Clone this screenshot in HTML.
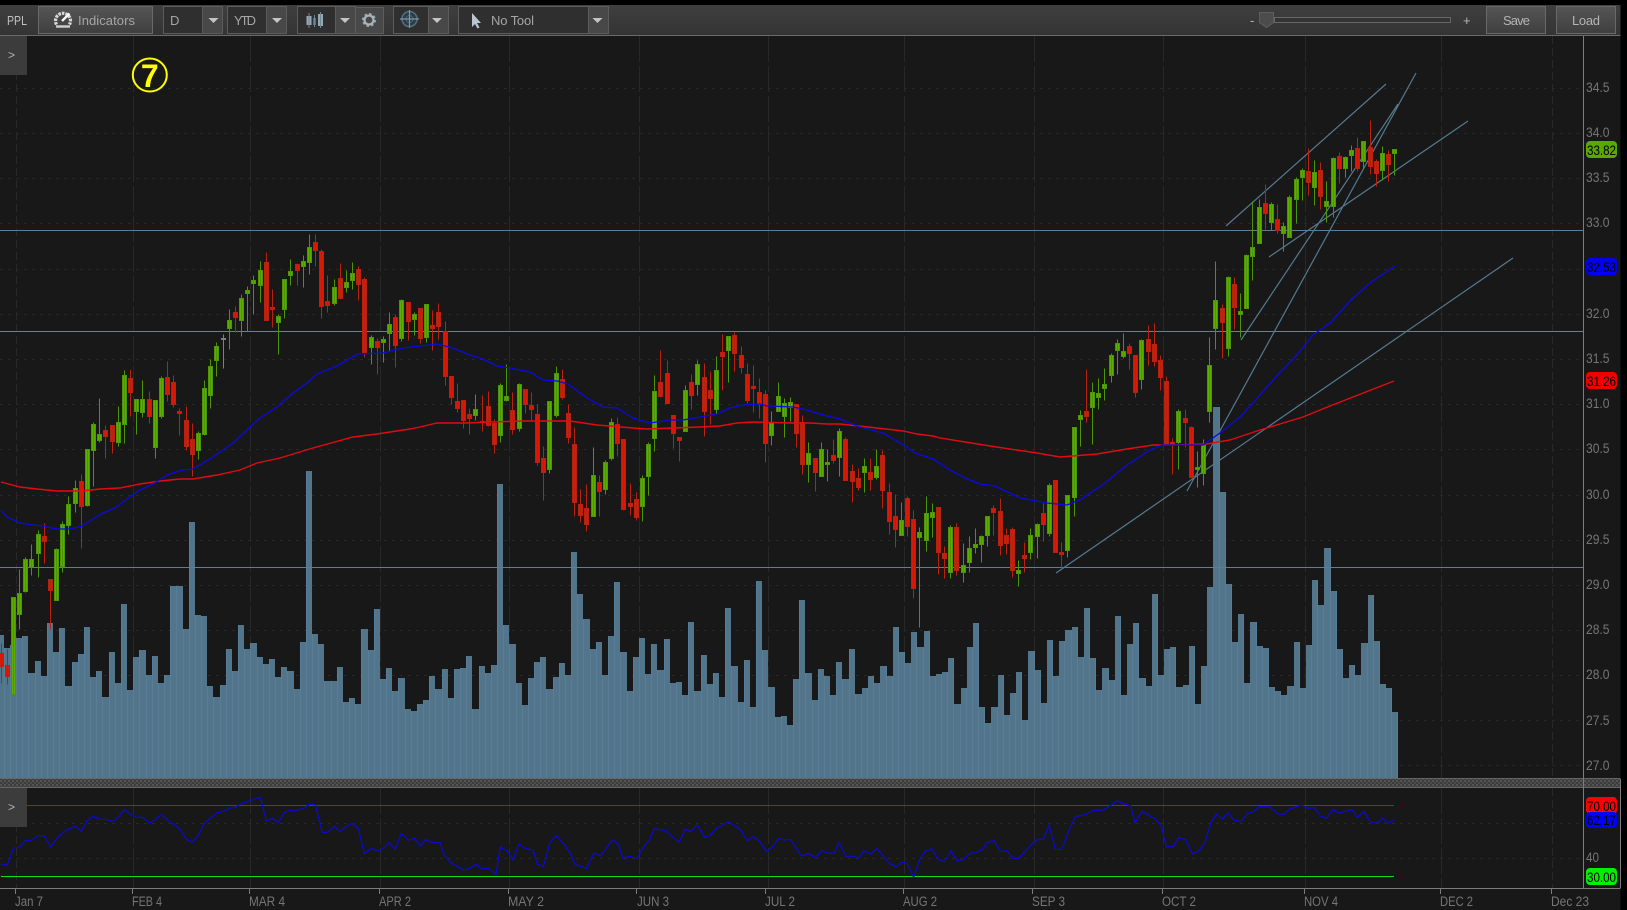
<!DOCTYPE html>
<html><head><meta charset="utf-8"><title>PPL chart</title>
<style>
html,body{margin:0;padding:0;background:#000;width:1627px;height:910px;overflow:hidden}
svg{display:block;font-family:"Liberation Sans",sans-serif}
.g{stroke:#4c9606;fill:#5cae00}.r{stroke:#bb200f;fill:#d81a08}.k{stroke:#808080;fill:#808080}
.a{fill:#757575;font-size:14px}.d{fill:#757575;font-size:13.5px}
.t{fill:#b4b4b4;font-size:13px}
.b{fill:#000;font-size:14px}
.tl{stroke:#557a90;stroke-width:1.2;fill:none}
.s{fill:#2f2f2f;stroke:#5c5c5c}.m{fill:#484848;stroke:#5c5c5c}.ar{fill:#c4c4c4}
.btn{fill:url(#bg);stroke:#696969}
polyline{fill:none;vector-effect:non-scaling-stroke}
</style></head><body>
<svg width="1627" height="910" viewBox="0 0 1627 910" xmlns="http://www.w3.org/2000/svg">
<defs>
<linearGradient id="tb" x1="0" y1="0" x2="0" y2="1"><stop offset="0" stop-color="#3f3f3f"/><stop offset="1" stop-color="#343434"/></linearGradient>
<linearGradient id="bg" x1="0" y1="0" x2="0" y2="1"><stop offset="0" stop-color="#555"/><stop offset="1" stop-color="#3f3f3f"/></linearGradient>
<pattern id="vol" x="-2" y="0" width="37" height="10" patternUnits="userSpaceOnUse"><rect width="37" height="10" fill="#52758c"/><rect x="0" width="1" height="10" fill="#587d97"/><rect x="6" width="1" height="10" fill="#587d97"/><rect x="12" width="1" height="10" fill="#587d97"/><rect x="18" width="1" height="10" fill="#587d97"/><rect x="24" width="1" height="10" fill="#587d97"/><rect x="30" width="1" height="10" fill="#587d97"/></pattern>
<pattern id="hat" width="4" height="4" patternUnits="userSpaceOnUse"><rect width="4" height="4" fill="#3c3c3c"/><rect width="2" height="2" fill="#555"/><rect x="2" y="2" width="2" height="2" fill="#4c4c4c"/></pattern>
</defs>
<rect width="1627" height="910" fill="#000"/>
<rect x="0" y="36" width="1620.5" height="874" fill="#181818"/>
<!-- toolbar -->
<rect x="0" y="5" width="1620.5" height="30" fill="url(#tb)"/>
<rect x="0" y="35" width="1620.5" height="1" fill="#6a6a6a"/>
<text x="7" y="25" class="t" textLength="20" lengthAdjust="spacingAndGlyphs" style="fill:#c0c0c0">PPL</text>
<rect x="38.5" y="6.5" width="114" height="27" class="btn"/>
<g transform="translate(63 20)"><path d="M-6.500 4.500A7.500 7.500 0 1 1 6.500 4.500" fill="none" stroke="#d8d8d8" stroke-width="3.200" stroke-dasharray="2.600 1"/><circle r="4" fill="#444"/><path d="M-1 1L6.500 -6.500" stroke="#f4f4f4" stroke-width="2.400"/><path d="M-7 6.500H7" stroke="#cfcfcf" stroke-width="2.400"/></g>
<text x="78" y="25" class="t" textLength="57" style="fill:#a6a6a6">Indicators</text>
<rect x="163.5" y="6.5" width="39" height="27" class="s"/><rect x="202.5" y="6.5" width="20" height="27" class="m"/><path d="M208.5 18h10l-5 5z" class="ar"/>
<text x="170" y="25" class="t" style="fill:#a6a6a6">D</text>
<rect x="227.5" y="6.5" width="39" height="27" class="s"/><rect x="266.5" y="6.5" width="20" height="27" class="m"/><path d="M272 18h10l-5 5z" class="ar"/>
<text x="234" y="25" class="t" textLength="22" style="fill:#a6a6a6">YTD</text>
<rect x="297.5" y="6.5" width="38" height="27" class="s"/><rect x="335.5" y="6.5" width="20" height="27" class="m"/><path d="M340 18h10l-5 5z" class="ar"/>
<path d="M306.500 16h5v9h-5zM313.500 18h2v7h-2zM318 14h5v12h-5z" fill="#93a9b8"/><path d="M309 13v15M314.500 15v12M320.500 12v16" stroke="#72868f"/>
<rect x="355.500" y="7.500" width="28" height="26" class="m"/>
<circle cx="369" cy="20" r="5.500" fill="none" stroke="#9aa7ae" stroke-width="3" stroke-dasharray="2.300 2"/><circle cx="369" cy="20" r="4.500" fill="none" stroke="#a8b4ba" stroke-width="2.200"/>
<rect x="393.500" y="6.500" width="35" height="27" class="s"/><rect x="428.500" y="6.500" width="20" height="27" class="m"/><path d="M432 18h10l-5 5z" class="ar"/>
<circle cx="409.500" cy="19" r="7.500" fill="#2b3c46" stroke="#566f7d" stroke-width="1.500"/><circle cx="409.500" cy="19" r="3.500" fill="none" stroke="#4a6270"/><path d="M400 19h19M409.500 10v18" stroke="#7d98a8" stroke-width="1.200"/>
<rect x="458.500" y="6.500" width="130" height="27" class="s"/><rect x="588.500" y="6.500" width="20" height="27" class="m"/><path d="M592.500 18h10l-5 5z" class="ar"/>
<path d="M472 13v14l3-3 2.500 4.500 2-1-2.500-4.500h4z" fill="#b8c6d0"/>
<text x="491" y="25" class="t" textLength="43" style="fill:#a6a6a6">No Tool</text>
<text x="1250" y="25" class="t">-</text>
<rect x="1274.500" y="17.500" width="176" height="5" fill="#343434" stroke="#666"/>
<path d="M1259.500 12.500h14v10l-7 5-7-5z" fill="#4c4c4c" stroke="#5e5e5e"/>
<text x="1463" y="25" class="t">+</text>
<rect x="1486.500" y="6.500" width="59" height="27" class="btn"/><text x="1503" y="25" class="t" textLength="27">Save</text>
<rect x="1556.500" y="6.500" width="59" height="27" class="btn"/><text x="1572" y="25" class="t" textLength="28">Load</text>
<!-- grid -->
<g stroke="#272727" stroke-width="1" stroke-dasharray="3 5" fill="none">
<path d="M0 88.500H1583M0 133.500H1583M0 178.500H1583M0 223.500H1583M0 269.500H1583M0 314.500H1583M0 359.500H1583M0 404.500H1583M0 449.500H1583M0 495.500H1583M0 540.500H1583M0 585.500H1583M0 630.500H1583M0 675.500H1583M0 720.500H1583M0 765.500H1583M0 823.500H1583M0 858.500H1583"/>
</g>
<g stroke="#282828" stroke-width="1" stroke-dasharray="26 4" fill="none">
<path d="M133.500 36V778M250.500 36V778M380.500 36V778M509.500 36V778M639.500 36V778M768.500 36V778M904.500 36V778M1034.500 36V778M1163.500 36V778M1305.500 36V778M1441.500 36V778"/>
<path d="M133.500 788V888M250.500 788V888M380.500 788V888M509.500 788V888M639.500 788V888M768.500 788V888M904.500 788V888M1034.500 788V888M1163.500 788V888M1305.500 788V888M1441.500 788V888"/>
</g>
<g stroke="#282828" stroke-dasharray="8 4" fill="none"><path d="M16.500 36V778M1552.500 36V778M16.500 788V888M1552.500 788V888"/></g>
<!-- volume -->
<path fill="url(#vol)" d="M0 778V635H4V648H10V645H16V638H22V636H28V673H35V661H41V676H47V623H53V652H59V628H65V686H72V662H78V654H84V627H90V677H96V671H102V697H109V652H115V683H121V604H127V690H133V657H139V650H146V675H152V656H158V683H164V675H170V586H176V586H183V629H189V522H195V615H201V616H207V686H213V697H220V685H226V649H232V671H238V625H244V649H250V643H257V657H263V664H269V659H275V677H281V667H287V671H294V689H300V642H306V471H312V634H318V644H324V681H331V681H337V667H343V702H349V698H355V704H361V629H368V650H374V609H380V679H386V668H392V691H398V678H405V709H411V711H417V704H423V700H429V676H435V689H442V669H448V698H454V669H460V668H466V656H472V709H479V666H485V673H491V665H497V484H503V625H509V644H516V683H522V705H528V678H534V662H540V657H546V689H553V677H559V663H565V675H571V552H577V594H583V619H590V649H596V642H602V675H608V636H614V582H620V652H627V691H633V657H639V638H645V674H651V644H657V670H664V639H670V683H676V682H682V695H688V622H694V691H701V655H707V684H713V673H719V697H725V608H731V666H738V702H744V660H750V707H756V581H762V650H768V687H775V717H781V716H787V725H793V679H799V600H805V673H812V700H818V669H824V676H830V695H836V662H842V679H849V649H855V694H862V688H868V676H874V683H880V666H887V676H893V627H899V652H905V663H911V632H917V647H924V631H930V676H936V674H942V672H948V658H954V704H961V688H967V647H973V623H979V707H985V723H991V707H998V675H1004V715H1010V693H1016V672H1022V720H1028V651H1035V670H1041V703H1047V640H1053V676H1059V641H1065V630H1072V627H1078V657H1084V608H1090V658H1096V690H1102V668H1109V680H1115V616H1121V695H1127V644H1133V623H1139V678H1146V686H1152V594H1158V675H1164V649H1170V647H1176V687H1183V685H1189V646H1195V704H1201V666H1207V587H1213V407H1220V492H1226V584H1232V642H1238V614H1244V683H1250V622H1257V646H1263V648H1269V687H1275V691H1281V695H1287V686H1294V642H1300V688H1306V645H1312V580H1318V605H1324V548H1331V591H1337V649H1343V678H1349V665H1355V675H1361V643H1368V595H1374V641H1380V684H1386V688H1392V712H1398V778z"/>
<!-- horizontal levels -->
<path d="M0 230.500H1583M0 567.500H1583" stroke="#5c7f97" fill="none"/>
<path d="M0 331.500H1583" stroke="#6b808f" fill="none"/>
<!-- trend lines -->
<path class="tl" d="M1226 226L1386 84M1269 257L1468 121M1187 491L1416 73M1241 340L1398 104M1056 573L1513 258"/>
<!-- candles -->
<g transform="translate(0 .5)">
<path class=r d="M1.5 643V683M-.5 653h4V666h-4z"/>
<path class=r d="M7.5 649V684M5.5 665h4V676h-4z"/>
<path class=g d="M13.5 597V694M11.5 597h4V694h-4z"/>
<path class=g d="M19.5 569V629M17.5 593h4V614h-4z"/>
<path class=g d="M25.5 557V592M23.5 559h4V591h-4z"/>
<path class=g d="M31.5 544V575M29.5 559h4V567h-4z"/>
<path class=g d="M38.5 530V577M36.5 534h4V553h-4z"/>
<path class=r d="M44.5 523V563M42.5 536h4V541h-4z"/>
<path class=r d="M50.5 579V629M48.5 579h4V590h-4z"/>
<path class=g d="M56.5 548V600M54.5 549h4V600h-4z"/>
<path class=g d="M62.5 521V572M60.5 524h4V566h-4z"/>
<path class=g d="M68.5 496V534M66.5 504h4V525h-4z"/>
<path class=g d="M75.5 480V512M73.5 488h4V503h-4z"/>
<path class=r d="M81.5 474V548M79.5 481h4V506h-4z"/>
<path class=g d="M87.5 449V506M85.5 449h4V505h-4z"/>
<path class=g d="M93.5 422V486M91.5 424h4V450h-4z"/>
<path class=g d="M99.5 398V442M97.5 434h4V440h-4z"/>
<path class=r d="M105.5 425V458M103.5 430h4V436h-4z"/>
<path class=r d="M112.5 425V453M110.5 425h4V441h-4z"/>
<path class=g d="M118.5 406V446M116.5 422h4V442h-4z"/>
<path class=g d="M124.5 370V443M122.5 375h4V424h-4z"/>
<path class=r d="M130.5 369V416M128.5 378h4V392h-4z"/>
<path class=g d="M136.5 399V434M134.5 399h4V411h-4z"/>
<path class=g d="M142.5 380V417M140.5 399h4V412h-4z"/>
<path class=r d="M149.5 391V423M147.5 399h4V416h-4z"/>
<path class=g d="M155.5 400V458M153.5 400h4V447h-4z"/>
<path class=g d="M161.5 376V418M159.5 378h4V416h-4z"/>
<path class=r d="M167.5 361V401M165.5 377h4V394h-4z"/>
<path class=r d="M173.5 375V407M171.5 382h4V404h-4z"/>
<path class=r d="M179.5 408V435M177.5 411h4V413h-4z"/>
<path class=r d="M186.5 406V450M184.5 420h4V446h-4z"/>
<path class=r d="M192.5 423V476M190.5 439h4V454h-4z"/>
<path class=g d="M198.5 431V459M196.5 433h4V450h-4z"/>
<path class=g d="M204.5 380V435M202.5 388h4V434h-4z"/>
<path class=g d="M210.5 359V408M208.5 366h4V395h-4z"/>
<path class=g d="M216.5 342V376M214.5 346h4V360h-4z"/>
<path class=k d="M223.5 334V368M221.5 338h4V339h-4z"/>
<path class=g d="M229.5 309V349M227.5 320h4V328h-4z"/>
<path class=r d="M235.5 306V332M233.5 312h4V317h-4z"/>
<path class=g d="M241.5 294V336M239.5 298h4V320h-4z"/>
<path class=g d="M247.5 286V331M245.5 290h4V293h-4z"/>
<path class=g d="M253.5 275V314M251.5 280h4V283h-4z"/>
<path class=g d="M260.5 261V302M258.5 270h4V285h-4z"/>
<path class=r d="M266.5 252V320M264.5 262h4V320h-4z"/>
<path class=r d="M272.5 289V327M270.5 307h4V309h-4z"/>
<path class=g d="M278.5 314V354M276.5 316h4V322h-4z"/>
<path class=g d="M284.5 279V318M282.5 279h4V309h-4z"/>
<path class=g d="M290.5 259V285M288.5 271h4V275h-4z"/>
<path class=r d="M297.5 263V285M295.5 264h4V270h-4z"/>
<path class=g d="M303.5 255V287M301.5 261h4V266h-4z"/>
<path class=g d="M309.5 234V274M307.5 247h4V262h-4z"/>
<path class=r d="M315.5 234V266M313.5 242h4V250h-4z"/>
<path class=r d="M321.5 249V318M319.5 251h4V306h-4z"/>
<path class=r d="M327.5 275V312M325.5 301h4V305h-4z"/>
<path class=g d="M334.5 279V305M332.5 287h4V303h-4z"/>
<path class=r d="M340.5 263V298M338.5 278h4V298h-4z"/>
<path class=g d="M346.5 270V292M344.5 282h4V287h-4z"/>
<path class=g d="M352.5 262V289M350.5 273h4V280h-4z"/>
<path class=r d="M358.5 266V300M356.5 269h4V284h-4z"/>
<path class=r d="M364.5 277V357M362.5 279h4V352h-4z"/>
<path class=g d="M371.5 335V364M369.5 337h4V347h-4z"/>
<path class=r d="M377.5 338V374M375.5 341h4V347h-4z"/>
<path class=g d="M383.5 336V362M381.5 339h4V342h-4z"/>
<path class=g d="M389.5 312V351M387.5 324h4V333h-4z"/>
<path class=r d="M395.5 314V367M393.5 317h4V345h-4z"/>
<path class=g d="M401.5 299V341M399.5 300h4V338h-4z"/>
<path class=r d="M408.5 302V340M406.5 302h4V321h-4z"/>
<path class=g d="M414.5 312V335M412.5 314h4V319h-4z"/>
<path class=r d="M420.5 308V343M418.5 308h4V338h-4z"/>
<path class=g d="M426.5 304V342M424.5 304h4V337h-4z"/>
<path class=r d="M432.5 310V350M430.5 325h4V328h-4z"/>
<path class=r d="M438.5 303V339M436.5 312h4V326h-4z"/>
<path class=r d="M445.5 321V385M443.5 331h4V376h-4z"/>
<path class=r d="M451.5 376V404M449.5 376h4V397h-4z"/>
<path class=r d="M457.5 383V412M455.5 401h4V408h-4z"/>
<path class=r d="M463.5 400V428M461.5 400h4V420h-4z"/>
<path class=r d="M469.5 408V434M467.5 414h4V418h-4z"/>
<path class=g d="M475.5 394V420M473.5 409h4V415h-4z"/>
<path class=r d="M482.5 395V431M480.5 421h4V422h-4z"/>
<path class=r d="M488.5 391V426M486.5 406h4V425h-4z"/>
<path class=r d="M494.5 419V453M492.5 423h4V444h-4z"/>
<path class=g d="M500.5 383V442M498.5 385h4V435h-4z"/>
<path class=g d="M506.5 364V401M504.5 396h4V400h-4z"/>
<path class=r d="M512.5 392V434M510.5 410h4V429h-4z"/>
<path class=g d="M519.5 383V431M517.5 384h4V428h-4z"/>
<path class=r d="M525.5 389V413M523.5 389h4V404h-4z"/>
<path class=r d="M531.5 392V421M529.5 405h4V409h-4z"/>
<path class=r d="M537.5 404V465M535.5 414h4V462h-4z"/>
<path class=r d="M543.5 446V500M541.5 458h4V472h-4z"/>
<path class=g d="M549.5 401V473M547.5 401h4V469h-4z"/>
<path class=g d="M556.5 366V417M554.5 373h4V415h-4z"/>
<path class=r d="M562.5 369V399M560.5 379h4V397h-4z"/>
<path class=r d="M568.5 404V443M566.5 413h4V437h-4z"/>
<path class=r d="M574.5 427V516M572.5 444h4V502h-4z"/>
<path class=r d="M580.5 489V522M578.5 504h4V515h-4z"/>
<path class=r d="M586.5 484V531M584.5 508h4V524h-4z"/>
<path class=g d="M593.5 447V516M591.5 475h4V516h-4z"/>
<path class=r d="M599.5 475V516M597.5 482h4V491h-4z"/>
<path class=g d="M605.5 460V494M603.5 462h4V489h-4z"/>
<path class=g d="M611.5 418V460M609.5 422h4V458h-4z"/>
<path class=r d="M617.5 417V456M615.5 424h4V443h-4z"/>
<path class=r d="M623.5 439V510M621.5 439h4V509h-4z"/>
<path class=r d="M630.5 483V515M628.5 503h4V506h-4z"/>
<path class=r d="M636.5 492V520M634.5 499h4V517h-4z"/>
<path class=g d="M642.5 475V521M640.5 478h4V506h-4z"/>
<path class=g d="M648.5 442V495M646.5 444h4V476h-4z"/>
<path class=g d="M654.5 375V451M652.5 391h4V438h-4z"/>
<path class=r d="M660.5 350V397M658.5 382h4V396h-4z"/>
<path class=r d="M667.5 360V403M665.5 373h4V403h-4z"/>
<path class=r d="M673.5 415V448M671.5 415h4V433h-4z"/>
<path class=r d="M679.5 437V461M677.5 437h4V440h-4z"/>
<path class=g d="M685.5 385V431M683.5 390h4V431h-4z"/>
<path class=r d="M691.5 374V409M689.5 382h4V395h-4z"/>
<path class=g d="M697.5 360V395M695.5 364h4V384h-4z"/>
<path class=r d="M704.5 363V436M702.5 377h4V411h-4z"/>
<path class=r d="M710.5 371V424M708.5 390h4V398h-4z"/>
<path class=g d="M716.5 356V413M714.5 370h4V409h-4z"/>
<path class=r d="M722.5 334V390M720.5 352h4V356h-4z"/>
<path class=g d="M728.5 336V382M726.5 336h4V350h-4z"/>
<path class=r d="M734.5 332V371M732.5 335h4V353h-4z"/>
<path class=r d="M741.5 346V373M739.5 355h4V367h-4z"/>
<path class=r d="M747.5 363V403M745.5 374h4V400h-4z"/>
<path class=r d="M753.5 365V412M751.5 386h4V388h-4z"/>
<path class=r d="M759.5 378V418M757.5 392h4V404h-4z"/>
<path class=r d="M765.5 390V462M763.5 394h4V443h-4z"/>
<path class=g d="M771.5 411V445M769.5 423h4V435h-4z"/>
<path class=g d="M778.5 382V411M776.5 396h4V411h-4z"/>
<path class=g d="M784.5 398V437M782.5 403h4V416h-4z"/>
<path class=g d="M790.5 397V421M788.5 402h4V407h-4z"/>
<path class=r d="M796.5 404V447M794.5 404h4V433h-4z"/>
<path class=r d="M802.5 415V474M800.5 422h4V464h-4z"/>
<path class=g d="M808.5 442V482M806.5 453h4V464h-4z"/>
<path class=r d="M815.5 458V491M813.5 458h4V472h-4z"/>
<path class=g d="M821.5 442V476M819.5 449h4V476h-4z"/>
<path class=g d="M827.5 449V481M825.5 462h4V464h-4z"/>
<path class=r d="M833.5 439V463M831.5 455h4V460h-4z"/>
<path class=g d="M839.5 428V476M837.5 431h4V457h-4z"/>
<path class=r d="M845.5 437V480M843.5 439h4V480h-4z"/>
<path class=r d="M852.5 464V502M850.5 471h4V481h-4z"/>
<path class=r d="M858.5 468V490M856.5 478h4V487h-4z"/>
<path class=g d="M864.5 458V492M862.5 466h4V472h-4z"/>
<path class=r d="M870.5 458V490M868.5 472h4V479h-4z"/>
<path class=g d="M876.5 449V479M874.5 466h4V477h-4z"/>
<path class=r d="M882.5 450V508M880.5 455h4V490h-4z"/>
<path class=r d="M889.5 483V534M887.5 492h4V521h-4z"/>
<path class=r d="M895.5 494V547M893.5 516h4V529h-4z"/>
<path class=g d="M901.5 502V535M899.5 520h4V535h-4z"/>
<path class=r d="M907.5 496V536M905.5 498h4V526h-4z"/>
<path class=r d="M913.5 510V598M911.5 519h4V588h-4z"/>
<path class=g d="M919.5 527V627M917.5 532h4V537h-4z"/>
<path class=g d="M926.5 496V551M924.5 513h4V540h-4z"/>
<path class=g d="M932.5 503V537M930.5 512h4V517h-4z"/>
<path class=r d="M938.5 507V574M936.5 507h4V552h-4z"/>
<path class=r d="M944.5 546V578M942.5 553h4V558h-4z"/>
<path class=g d="M950.5 525V578M948.5 527h4V572h-4z"/>
<path class=r d="M956.5 523V575M954.5 527h4V570h-4z"/>
<path class=g d="M963.5 543V582M961.5 565h4V572h-4z"/>
<path class=g d="M969.5 536V572M967.5 548h4V562h-4z"/>
<path class=g d="M975.5 528V553M973.5 544h4V547h-4z"/>
<path class=g d="M981.5 535V562M979.5 536h4V544h-4z"/>
<path class=g d="M987.5 516V546M985.5 516h4V535h-4z"/>
<path class=r d="M993.5 505V535M991.5 508h4V512h-4z"/>
<path class=r d="M1000.5 498V555M998.5 511h4V545h-4z"/>
<path class=r d="M1006.5 528V554M1004.5 535h4V543h-4z"/>
<path class=r d="M1012.5 527V577M1010.5 529h4V570h-4z"/>
<path class=g d="M1018.5 560V586M1016.5 570h4V573h-4z"/>
<path class=r d="M1024.5 542V572M1022.5 555h4V558h-4z"/>
<path class=g d="M1030.5 528V559M1028.5 535h4V552h-4z"/>
<path class=g d="M1037.5 523V558M1035.5 524h4V536h-4z"/>
<path class=r d="M1043.5 503V541M1041.5 513h4V524h-4z"/>
<path class=g d="M1049.5 483V536M1047.5 485h4V533h-4z"/>
<path class=r d="M1055.5 480V552M1053.5 480h4V552h-4z"/>
<path class=r d="M1061.5 542V567M1059.5 552h4V554h-4z"/>
<path class=g d="M1067.5 495V557M1065.5 495h4V550h-4z"/>
<path class=g d="M1074.5 427V516M1072.5 427h4V497h-4z"/>
<path class=g d="M1080.5 410V446M1078.5 415h4V419h-4z"/>
<path class=r d="M1086.5 369V422M1084.5 411h4V416h-4z"/>
<path class=g d="M1092.5 382V444M1090.5 392h4V407h-4z"/>
<path class=g d="M1098.5 378V409M1096.5 393h4V397h-4z"/>
<path class=g d="M1104.5 368V400M1102.5 384h4V388h-4z"/>
<path class=g d="M1111.5 353V382M1109.5 355h4V375h-4z"/>
<path class=g d="M1117.5 339V374M1115.5 343h4V350h-4z"/>
<path class=g d="M1123.5 333V358M1121.5 351h4V356h-4z"/>
<path class=r d="M1129.5 343V369M1127.5 346h4V353h-4z"/>
<path class=r d="M1135.5 355V397M1133.5 355h4V392h-4z"/>
<path class=g d="M1141.5 339V389M1139.5 340h4V379h-4z"/>
<path class=r d="M1148.5 325V365M1146.5 339h4V351h-4z"/>
<path class=r d="M1154.5 323V366M1152.5 344h4V361h-4z"/>
<path class=r d="M1160.5 355V390M1158.5 360h4V377h-4z"/>
<path class=r d="M1166.5 376V444M1164.5 381h4V444h-4z"/>
<path class=r d="M1172.5 438V474M1170.5 442h4V444h-4z"/>
<path class=g d="M1178.5 409V469M1176.5 411h4V442h-4z"/>
<path class=r d="M1185.5 409V447M1183.5 418h4V422h-4z"/>
<path class=r d="M1191.5 426V477M1189.5 427h4V477h-4z"/>
<path class=g d="M1197.5 451V487M1195.5 467h4V469h-4z"/>
<path class=g d="M1203.5 439V485M1201.5 445h4V473h-4z"/>
<path class=g d="M1209.5 337V422M1207.5 365h4V411h-4z"/>
<path class=g d="M1215.5 261V349M1213.5 300h4V328h-4z"/>
<path class=r d="M1222.5 304V358M1220.5 308h4V322h-4z"/>
<path class=g d="M1228.5 276V356M1226.5 277h4V348h-4z"/>
<path class=r d="M1234.5 277V329M1232.5 284h4V307h-4z"/>
<path class=g d="M1240.5 293V337M1238.5 311h4V314h-4z"/>
<path class=g d="M1246.5 254V308M1244.5 255h4V308h-4z"/>
<path class=g d="M1252.5 201V280M1250.5 247h4V256h-4z"/>
<path class=g d="M1259.5 199V243M1257.5 207h4V243h-4z"/>
<path class=r d="M1265.5 184V229M1263.5 203h4V213h-4z"/>
<path class=g d="M1271.5 202V230M1269.5 204h4V222h-4z"/>
<path class=r d="M1277.5 204V233M1275.5 219h4V230h-4z"/>
<path class=g d="M1283.5 222V251M1281.5 226h4V233h-4z"/>
<path class=g d="M1289.5 195V237M1287.5 197h4V237h-4z"/>
<path class=g d="M1296.5 177V223M1294.5 179h4V199h-4z"/>
<path class=g d="M1302.5 168V200M1300.5 170h4V177h-4z"/>
<path class=r d="M1308.5 148V195M1306.5 171h4V182h-4z"/>
<path class=g d="M1314.5 160V205M1312.5 172h4V187h-4z"/>
<path class=r d="M1320.5 162V209M1318.5 170h4V196h-4z"/>
<path class=g d="M1326.5 181V222M1324.5 201h4V206h-4z"/>
<path class=g d="M1333.5 157V217M1331.5 158h4V206h-4z"/>
<path class=r d="M1339.5 152V183M1337.5 156h4V168h-4z"/>
<path class=g d="M1345.5 156V177M1343.5 157h4V168h-4z"/>
<path class=g d="M1351.5 145V171M1349.5 150h4V155h-4z"/>
<path class=r d="M1357.5 137V171M1355.5 148h4V168h-4z"/>
<path class=g d="M1363.5 141V169M1361.5 141h4V161h-4z"/>
<path class=r d="M1370.5 120V174M1368.5 147h4V166h-4z"/>
<path class=r d="M1376.5 159V186M1374.5 161h4V173h-4z"/>
<path class=g d="M1382.5 146V180M1380.5 153h4V170h-4z"/>
<path class=r d="M1388.5 150V181M1386.5 154h4V164h-4z"/>
<path class=g d="M1394.5 149V175M1392.5 149h4V153h-4z"/>
</g>
<!-- moving averages -->
<polyline stroke="#e00c12" stroke-width="1.400" points="1,482 20,487 37,489 57,491 82,491 100,489 120,488 140,484 160,481 180,479 193,479 217,475 240,470 257,463 280,458 313,448 353,437 377,434 410,429 420,427 437,423 467,423 490,422 523,421 570,421 597,425 633,428 647,429 673,428 700,427 720,426 737,423 753,422 793,423 810,423 827,424 840,424 877,428 903,431 917,434 933,436 940,438 990,446 1037,453 1060,457 1073,456 1097,454 1127,449 1153,445 1173,445 1207,444 1230,440 1260,430 1303,417 1330,406 1394,381"/>
<polyline stroke="#0a0ae4" stroke-width="1.300" points="1,510 7,517 20,523 33,525 43,526 57,529 70,529 82,526 93,519 103,513 115,508 127,499 140,490 153,484 167,475 182,470 193,469 213,457 233,443 247,430 260,418 277,407 293,393 307,383 317,374 337,366 358,354 383,353 403,348 420,346 437,344 453,348 470,355 483,359 497,366 510,368 530,372 543,380 557,381 568,384 587,398 603,407 617,408 633,418 650,423 670,420 683,420 700,417 717,414 730,408 743,405 760,404 767,406 793,407 807,410 823,415 840,419 860,427 883,433 907,447 915,453 933,459 950,470 965,478 980,484 995,486 1020,498 1047,503 1067,505 1080,500 1105,483 1127,465 1150,450 1162,445 1203,445 1220,433 1240,417 1253,403 1273,380 1297,355 1313,335 1330,323 1352,299 1370,283 1395,266"/>
<!-- separator -->
<rect x="0" y="778" width="1620.500" height="10" fill="url(#hat)"/>
<rect x="0" y="778" width="1620.500" height="1" fill="#666"/><rect x="0" y="787" width="1620.500" height="1" fill="#666"/>
<!-- RSI -->
<path d="M0 805.500H1394" stroke="#d20a0a"/>
<path d="M1 876.500H1394" stroke="#12dc12"/>
<polyline stroke="#0a0ad8" stroke-width="1.200" transform="translate(0 770) scale(.33333)" points="3,283 22,285 40,235 58,231 76,212 94,211 115,196 133,198 152,231 170,205 190,187 208,176 226,169 244,184 262,151 280,139 298,148 316,148 338,154 355,142 373,118 391,132 409,142 427,142 448,160 466,148 484,133 502,150 520,163 538,175 559,208 577,217 595,195 613,160 631,145 649,130 670,124 688,115 706,112 724,100 742,95 760,88 781,82 799,153 817,145 835,158 853,127 871,121 892,121 910,115 928,103 946,104 967,187 982,187 1003,169 1021,184 1039,169 1057,160 1075,175 1093,250 1114,235 1135,243 1150,235 1168,217 1186,238 1204,190 1225,211 1243,204 1260,226"/>
<polyline stroke="#0a0ad8" stroke-width="1.200" transform="translate(420 785) scale(.574 .33333)" points="0,185 10,163 20,172 35,173 42,210 55,235 75,254 85,252 97,238 108,251 120,250 132,269 140,186 152,198 162,225 172,177 183,190 197,195 205,238 215,244 227,170 238,152 252,180 262,205 270,238 290,250 303,204 315,213 335,164 346,178 353,219 365,214 378,220 390,185 400,163 408,131 428,137 442,160 452,171 462,132 472,139 483,120 496,157 506,150 515,132 537,110 558,133 570,167 580,155 592,170 604,200 615,183 625,160 635,165 645,163 665,213 678,205 688,219 700,197 712,205 722,203 730,173 742,214 755,214 765,220 773,197 785,207 796,191 818,235 830,245 840,232 848,234 860,277 870,225 880,198 892,192 903,223 914,230 925,197 936,227 947,224 958,205 968,203 980,193 988,172 1001,167 1010,200 1022,197 1033,220 1043,220 1070,170 1078,163 1086,163 1096,120 1107,193 1118,193 1132,130 1142,95 1160,88 1172,77 1190,75 1200,65 1215,47 1228,58 1238,62 1246,113 1258,78 1270,92 1282,103 1292,125 1300,185 1312,185 1322,157 1334,165 1346,207 1358,197 1368,170 1378,112 1388,87 1398,103 1408,83 1418,105 1430,110 1442,85 1452,80 1462,65 1480,65 1495,88 1505,88 1515,72 1535,60 1548,70 1558,68 1568,90"/>
<polyline stroke="#0a0ad8" stroke-width="1.200" transform="translate(1300 770) scale(.33333)" points="60,138 80,145 98,118 118,130 155,118 172,142 192,124 210,155 228,160 248,145 265,160 283,148"/>
<!-- collapse buttons -->
<rect x="0" y="36" width="27" height="39" fill="#3c3c3c"/><text x="8" y="59" class="t" style="font-size:12px">&gt;</text>
<rect x="0" y="788" width="27" height="39" fill="#3c3c3c"/><text x="8" y="811" class="t" style="font-size:12px">&gt;</text>
<!-- axes -->
<path d="M1583.500 36V888.500M0 888.500H1620.500M1620.500 779V888" stroke="#7c7c7c" fill="none"/>
<path d="M15.500 889v5M132.500 889v5M249.500 889v5M379.500 889v5M508.500 889v5M636.500 889v5M765.500 889v5M903.500 889v5M1032.500 889v5M1162.500 889v5M1304.500 889v5M1440.500 889v5M1551.500 889v5" stroke="#7c7c7c"/>
<g>
<text x="1586" y="92" class="a" textLength="23.500" lengthAdjust="spacingAndGlyphs">34.5</text>
<text x="1586" y="137" class="a" textLength="23.500" lengthAdjust="spacingAndGlyphs">34.0</text>
<text x="1586" y="182" class="a" textLength="23.500" lengthAdjust="spacingAndGlyphs">33.5</text>
<text x="1586" y="227" class="a" textLength="23.500" lengthAdjust="spacingAndGlyphs">33.0</text>
<text x="1586" y="318" class="a" textLength="23.500" lengthAdjust="spacingAndGlyphs">32.0</text>
<text x="1586" y="363" class="a" textLength="23.500" lengthAdjust="spacingAndGlyphs">31.5</text>
<text x="1586" y="408" class="a" textLength="23.500" lengthAdjust="spacingAndGlyphs">31.0</text>
<text x="1586" y="453" class="a" textLength="23.500" lengthAdjust="spacingAndGlyphs">30.5</text>
<text x="1586" y="499" class="a" textLength="23.500" lengthAdjust="spacingAndGlyphs">30.0</text>
<text x="1586" y="544" class="a" textLength="23.500" lengthAdjust="spacingAndGlyphs">29.5</text>
<text x="1586" y="589" class="a" textLength="23.500" lengthAdjust="spacingAndGlyphs">29.0</text>
<text x="1586" y="634" class="a" textLength="23.500" lengthAdjust="spacingAndGlyphs">28.5</text>
<text x="1586" y="679" class="a" textLength="23.500" lengthAdjust="spacingAndGlyphs">28.0</text>
<text x="1586" y="725" class="a" textLength="23.500" lengthAdjust="spacingAndGlyphs">27.5</text>
<text x="1586" y="770" class="a" textLength="23.500" lengthAdjust="spacingAndGlyphs">27.0</text>
<text x="1586" y="862" class="a" textLength="13" lengthAdjust="spacingAndGlyphs">40</text>
</g>
<!-- badges -->
<rect x="1586" y="141" width="31" height="17" rx="4" fill="#5aa800"/><text x="1587" y="155" class="b" textLength="29" lengthAdjust="spacingAndGlyphs">33.82</text>
<rect x="1586" y="258" width="31" height="17" rx="4" fill="#0000f5"/><text x="1587" y="272" class="b" textLength="29" lengthAdjust="spacingAndGlyphs">32.53</text>
<rect x="1586" y="372" width="31" height="17" rx="4" fill="#f20000"/><text x="1587" y="386" class="b" textLength="29" lengthAdjust="spacingAndGlyphs">31.26</text>
<rect x="1586" y="797" width="31" height="17" rx="4" fill="#ff0000"/><text x="1587" y="811" class="b" textLength="29" lengthAdjust="spacingAndGlyphs">70.00</text>
<rect x="1586" y="812" width="31" height="16" rx="4" fill="#0000ff"/><text x="1587" y="825" class="b" textLength="29" lengthAdjust="spacingAndGlyphs">62.17</text>
<rect x="1586" y="868" width="31" height="17" rx="4" fill="#00f000"/><text x="1587" y="882" class="b" textLength="29" lengthAdjust="spacingAndGlyphs">30.00</text>
<!-- dates -->
<g>
<text x="15" y="906" class="d" textLength="28" lengthAdjust="spacingAndGlyphs">Jan 7</text>
<text x="132" y="906" class="d" textLength="30" lengthAdjust="spacingAndGlyphs">FEB 4</text>
<text x="249" y="906" class="d" textLength="36" lengthAdjust="spacingAndGlyphs">MAR 4</text>
<text x="379" y="906" class="d" textLength="32" lengthAdjust="spacingAndGlyphs">APR 2</text>
<text x="508" y="906" class="d" textLength="36" lengthAdjust="spacingAndGlyphs">MAY 2</text>
<text x="637" y="906" class="d" textLength="32" lengthAdjust="spacingAndGlyphs">JUN 3</text>
<text x="765" y="906" class="d" textLength="30" lengthAdjust="spacingAndGlyphs">JUL 2</text>
<text x="903" y="906" class="d" textLength="34" lengthAdjust="spacingAndGlyphs">AUG 2</text>
<text x="1032" y="906" class="d" textLength="33" lengthAdjust="spacingAndGlyphs">SEP 3</text>
<text x="1162" y="906" class="d" textLength="34" lengthAdjust="spacingAndGlyphs">OCT 2</text>
<text x="1304" y="906" class="d" textLength="34" lengthAdjust="spacingAndGlyphs">NOV 4</text>
<text x="1440" y="906" class="d" textLength="33" lengthAdjust="spacingAndGlyphs">DEC 2</text>
<text x="1551" y="906" class="d" textLength="38" lengthAdjust="spacingAndGlyphs">Dec 23</text>
</g>
<!-- circled seven -->
<ellipse cx="149.800" cy="75" rx="17" ry="16.500" fill="none" stroke="#ffff00" stroke-width="2"/>
<text x="149.800" y="87" text-anchor="middle" style="font-size:32px;font-weight:bold;fill:#ffff00">7</text>
</svg>
</body></html>
